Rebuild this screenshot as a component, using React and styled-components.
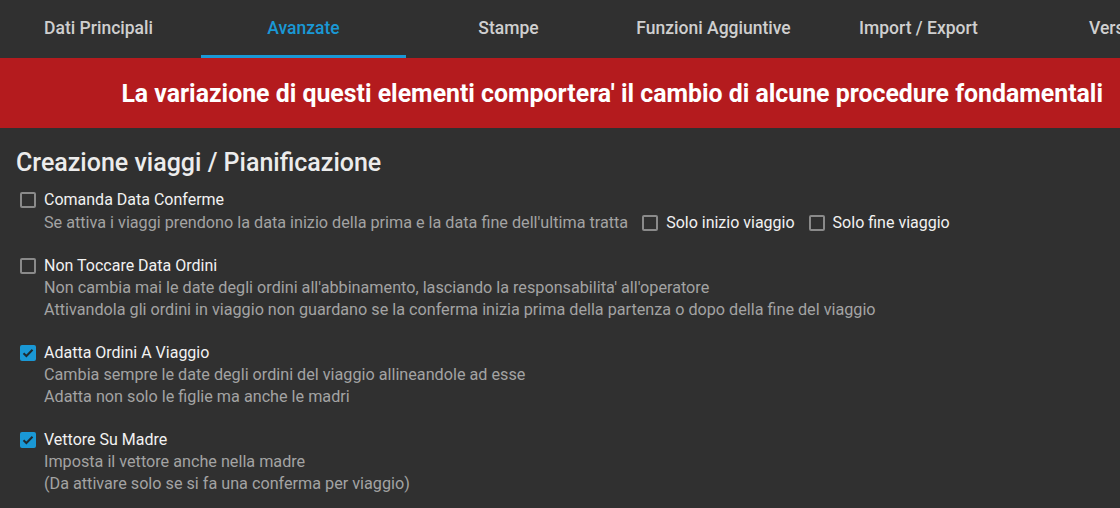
import React from 'react';
import styled, { createGlobalStyle } from 'styled-components';

const GlobalStyle = createGlobalStyle`
    html, body {
        margin: 0;
        padding: 0;
        background: #303030;
        font-family: Roboto, "Noto Sans", sans-serif;
    }
    * {
        box-sizing: border-box;
    }
`;

const tabs = ['Dati Principali', 'Avanzate', 'Stampe', 'Funzioni Aggiuntive', 'Import / Export', 'Versione'];

const options = [
    {
        id: 'comanda',
        label: 'Comanda Data Conferme',
        checked: false,
        lines: ["Se attiva i viaggi prendono la data inizio della prima e la data fine dell'ultima tratta"],
        extras: ['Solo inizio viaggio', 'Solo fine viaggio'],
    },
    {
        id: 'nontoccare',
        label: 'Non Toccare Data Ordini',
        checked: false,
        lines: [
            "Non cambia mai le date degli ordini all'abbinamento, lasciando la responsabilita' all'operatore",
            'Attivandola gli ordini in viaggio non guardano se la conferma inizia prima della partenza o dopo della fine del viaggio',
        ],
    },
    {
        id: 'adatta',
        label: 'Adatta Ordini A Viaggio',
        checked: true,
        lines: [
            'Cambia sempre le date degli ordini del viaggio allineandole ad esse',
            'Adatta non solo le figlie ma anche le madri',
        ],
    },
    {
        id: 'vettore',
        label: 'Vettore Su Madre',
        checked: true,
        lines: [
            'Imposta il vettore anche nella madre',
            '(Da attivare solo se si fa una conferma per viaggio)',
        ],
    },
];

const Page = styled.div`
    width: 1120px;
    height: 508px;
    overflow: hidden;
    background: #303030;
`;

const TabBar = styled.div`
    display: flex;
    height: 58px;
    margin-left: -4px;
    background: #303030;
    overflow: hidden;
`;

const Tab = styled.div`
    flex: 0 0 205px;
    display: flex;
    align-items: center;
    justify-content: center;
    font-size: 17.5px;
    font-weight: 500;
    white-space: nowrap;
    color: ${(props) => (props.active ? '#1a98d5' : '#cfcfcf')};
    border-bottom: 3px solid ${(props) => (props.active ? '#1a98d5' : 'transparent')};
    padding-top: 1px;
`;

const Banner = styled.div`
    height: 70px;
    background: #b41b1e;
    display: flex;
    align-items: center;
    justify-content: flex-end;
    padding-right: 17px;
    color: #ffffff;
    font-size: 24.85px;
    font-weight: 700;
    white-space: nowrap;
`;

const Section = styled.div`
    padding: 20px 16px 0 16px;
`;

const Title = styled.h2`
    margin: 0 0 11px 0;
    font-size: 25px;
    line-height: 30px;
    font-weight: 500;
    color: #ececec;
`;

const Option = styled.div`
    display: grid;
    grid-template-columns: 16px 1fr;
    column-gap: 8px;
    padding-left: 4px;
    margin-bottom: 21px;
`;

const Box = styled.span`
    width: 16px;
    height: 16px;
    margin-top: 3px;
    border-radius: 2px;
    flex: 0 0 16px;
    display: inline-flex;
    align-items: center;
    justify-content: center;
    border: ${(props) => (props.checked ? 'none' : '2px solid #8a8a8a')};
    background: ${(props) => (props.checked ? '#1a98d5' : 'transparent')};
`;

const Label = styled.div`
    font-size: 16px;
    line-height: 22px;
    color: #f2f2f2;
`;

const Desc = styled.div`
    grid-column: 2;
    font-size: 16.2px;
    line-height: 22px;
    color: #a3a3a3;
    display: flex;
    align-items: center;
    white-space: nowrap;
`;

const Extra = styled.span`
    display: inline-flex;
    align-items: center;
    gap: 8px;
    margin-left: 14px;
    font-size: 16px;
    color: #f2f2f2;
    line-height: 23px;

    ${Box} {
        margin-top: 0;
    }
`;

function CheckBox({ checked }) {
    return (
        <Box checked={checked}>
            {checked && (
                <svg width="12" height="10" viewBox="0 0 12 10">
                    <path d="M1.5 5.2 L4.4 8 L10.5 1.8" fill="none" stroke="#1f2a30" strokeWidth="2" />
                </svg>
            )}
        </Box>
    );
}

export default function App() {
    return (
        <Page>
            <GlobalStyle />
            <TabBar>
                {tabs.map((t) => (
                    <Tab key={t} active={t === 'Avanzate'}>{t}</Tab>
                ))}
            </TabBar>
            <Banner>La variazione di questi elementi comportera' il cambio di alcune procedure fondamentali</Banner>
            <Section>
                <Title>Creazione viaggi / Pianificazione</Title>
                {options.map((opt) => (
                    <Option key={opt.id}>
                        <CheckBox checked={opt.checked} />
                        <Label>{opt.label}</Label>
                        {opt.lines.map((line, i) => (
                            <Desc key={i}>
                                {line}
                                {i === 0 && opt.extras && opt.extras.map((x) => (
                                    <Extra key={x}>
                                        <CheckBox checked={false} />
                                        {x}
                                    </Extra>
                                ))}
                            </Desc>
                        ))}
                    </Option>
                ))}
            </Section>
        </Page>
    );
}
